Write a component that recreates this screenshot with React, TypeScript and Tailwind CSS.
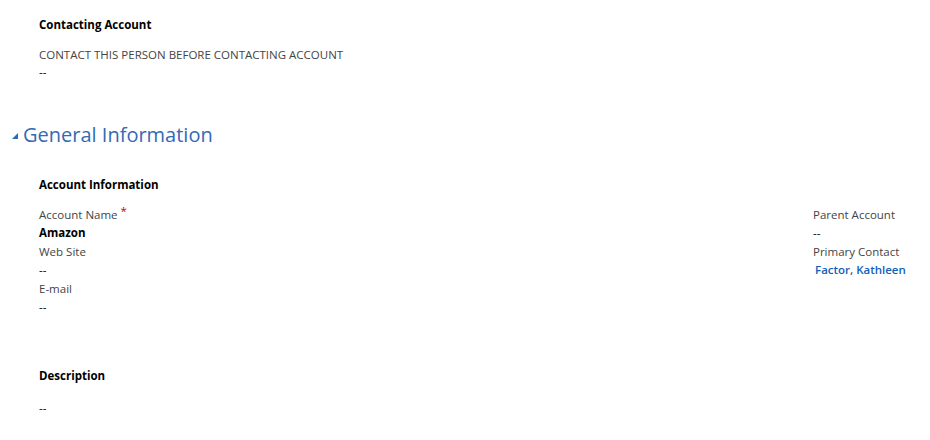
const font = { fontFamily: '"Open Sans", "Noto Sans", sans-serif' };

function Field({ label, value, required, bold, link }: { label: string; value: string; required?: boolean; bold?: boolean; link?: boolean }) {
  return (
    <div>
      <div className="text-[#444444] leading-[18.4px]">
        {label}
        {required && <span className="text-[#cc0000] ml-[3px] relative -top-[4px]">*</span>}
      </div>
      <div
        className={
          'leading-[18.4px] ' +
          (link ? 'font-semibold text-[#1160b7] pl-[2px]' : bold ? 'font-bold text-black' : 'text-black')
        }
      >
        {value}
      </div>
    </div>
  );
}

export default function App() {
  return (
    <div className="w-[930px] h-[440px] bg-white text-[11.5px] overflow-hidden" style={font}>
      <div className="pl-[39px] pt-[16px]">
        <div className="font-bold text-black leading-[18px]">Contacting Account</div>
        <div className="mt-[12px] text-[#444444] leading-[18px]">CONTACT THIS PERSON BEFORE CONTACTING ACCOUNT</div>
        <div className="text-black leading-[16px]">--</div>
      </div>

      <div className="flex items-center mt-[40px] pl-[11px] h-[30px]">
        <svg width="8" height="8" viewBox="0 0 8 8" className="mr-[4px] mt-[1px]">
          <polygon points="7,1 7,7 1,7" fill="#2b6cb5" />
        </svg>
        <div className="text-[20px] text-[#3469b4] leading-[30px]">General Information</div>
      </div>

      <div className="pl-[39px] mt-[26px]">
        <div className="font-bold text-black leading-[18px]">Account Information</div>
        <div className="grid grid-cols-[774px_1fr] mt-[12px]">
          <div>
            <Field label="Account Name" value="Amazon" required bold />
            <Field label="Web Site" value="--" />
            <Field label="E-mail" value="--" />
          </div>
          <div>
            <Field label="Parent Account" value="--" />
            <Field label="Primary Contact" value="Factor, Kathleen" link />
          </div>
        </div>

        <div className="font-bold text-black leading-[18px] mt-[51px]">Description</div>
        <div className="text-black leading-[18px] mt-[14px]">--</div>
      </div>
    </div>
  );
}
